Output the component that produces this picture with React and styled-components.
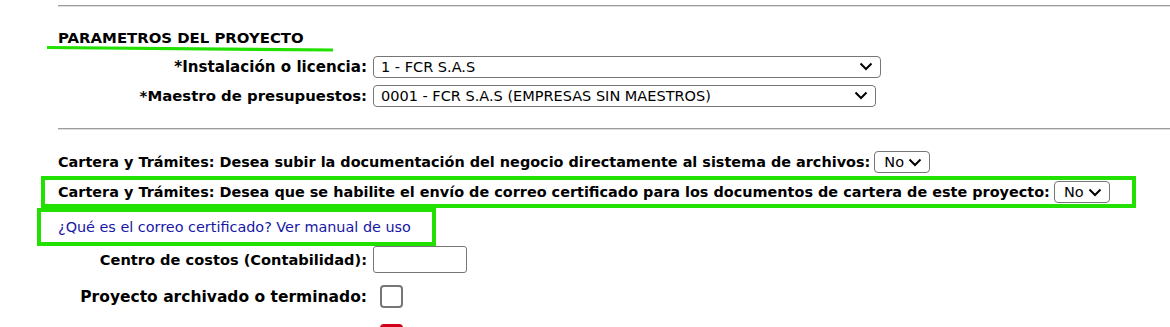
import React from "react";
import styled, { createGlobalStyle } from "styled-components";

const GlobalStyle = createGlobalStyle`
  html, body {
    margin: 0;
    padding: 0;
    background: #fff;
  }
  body {
    font-family: Tahoma, "DejaVu Sans", Verdana, sans-serif;
    color: #000;
    overflow: hidden;
  }
`;

const GREEN = "#22e100";

const Page = styled.div`
  position: relative;
  width: 1170px;
  height: 327px;
  overflow: hidden;
  padding-left: 58px;
  box-sizing: border-box;
`;

const Rule = styled.hr`
  margin: ${(p) => p.$top}px 0 0 0;
  height: 0;
  border: 0;
  border-top: 1px solid #9c9c9c;
  border-bottom: 1px solid #dedede;
`;

const Title = styled.h3`
  margin: 19px 0 0;
  height: 24px;
  line-height: 24px;
  font-size: 14.9px;
  font-weight: bold;
`;

// hand drawn marker under the title
const Underline = styled.svg`
  position: absolute;
  left: 47px;
  top: 45px;
`;

const FieldRow = styled.div`
  display: grid;
  grid-template-columns: 309px auto;
  column-gap: 6px;
  align-items: center;
  height: ${(p) => p.$h}px;
  margin-top: ${(p) => p.$mt || 0}px;
`;

const Label = styled.label`
  text-align: right;
  font-weight: bold;
  font-size: ${(p) => p.$size || 14.6}px;
  white-space: nowrap;
`;

const SelectBox = styled.div`
  display: flex;
  align-items: center;
  justify-content: space-between;
  box-sizing: border-box;
  width: ${(p) => p.$w}px;
  height: 22px;
  padding: 0 7px 0 ${(p) => p.$pl || 7}px;
  border: 1px solid #767676;
  border-radius: 4px;
  background: #fff;
  font-size: 14.5px;
  font-weight: normal;
  white-space: nowrap;
`;

const Chevron = () => (
  <svg width="14" height="9" viewBox="0 0 14 9">
    <path d="M1.5 1.5 L7 7 L12.5 1.5" fill="none" stroke="#000" strokeWidth="2" />
  </svg>
);

const Select = ({ value, w, pl }) => (
  <SelectBox $w={w} $pl={pl}>
    <span>{value}</span>
    <Chevron />
  </SelectBox>
);

const Question = styled.div`
  display: flex;
  align-items: center;
  gap: 4px;
  height: 24px;
  margin-top: ${(p) => p.$mt || 0}px;
  font-weight: bold;
  font-size: 14.43px;
  white-space: nowrap;
`;

const Highlight = styled.div`
  box-sizing: border-box;
  width: ${(p) => p.$w}px;
  height: ${(p) => p.$h}px;
  margin-top: ${(p) => p.$mt || 0}px;
  margin-left: -${(p) => p.$shift}px;
  padding-left: ${(p) => p.$shift - 4}px;
  border: 4px solid ${GREEN};
  display: flex;
  align-items: center;
`;

const HelpLink = styled.a`
  color: #1717a5;
  text-decoration: none;
  font-size: 14.4px;
  white-space: nowrap;
`;

const TextInput = styled.div`
  box-sizing: border-box;
  width: 94px;
  height: 27px;
  border: 1px solid #767676;
  border-radius: 3px;
  background: #fff;
`;

const Check = styled.div`
  box-sizing: border-box;
  width: 23px;
  height: 23px;
  margin-left: 7px;
  border: 2px solid ${(p) => (p.$red ? "#d3001b" : "#767676")};
  border-radius: 4px;
  background: ${(p) => (p.$red ? "#d3001b" : "#fff")};
`;

export default function App() {
  return (
    <>
      <GlobalStyle />
      <Page>
        <Rule $top={5} />
        <Title>PARAMETROS DEL PROYECTO</Title>
        <Underline width="290" height="8" viewBox="0 0 290 8">
          <path d="M0 2.5 L286 5" stroke={GREEN} strokeWidth="3.2" fill="none" />
        </Underline>

        <FieldRow $h={29} $mt={2}>
          <Label $size={15.1}>*Instalación o licencia:</Label>
          <Select value="1 - FCR S.A.S" w={508} />
        </FieldRow>
        <FieldRow $h={29}>
          <Label $size={14.9}>*Maestro de presupuestos:</Label>
          <Select value="0001 - FCR S.A.S (EMPRESAS SIN MAESTROS)" w={503} />
        </FieldRow>

        <Rule $top={18} />

        <Question $mt={20}>
          Cartera y Trámites: Desea subir la documentación del negocio directamente al sistema de archivos:
          <Select value="No" w={56} pl={9} />
        </Question>

        <Highlight $w={1095} $h={32} $shift={17} $mt={2}>
          <Question>
            Cartera y Trámites: Desea que se habilite el envío de correo certificado para los documentos de cartera de este proyecto:
            <Select value="No" w={56} pl={9} />
          </Question>
        </Highlight>
        <Highlight $w={399} $h={38} $shift={21}>
          <HelpLink href="#">¿Qué es el correo certificado? Ver manual de uso</HelpLink>
        </Highlight>

        <FieldRow $h={26}>
          <Label>Centro de costos (Contabilidad):</Label>
          <TextInput />
        </FieldRow>
        <FieldRow $h={29} $mt={10}>
          <Label $size={15.5}>Proyecto archivado o terminado:</Label>
          <Check />
        </FieldRow>
        <FieldRow $h={23} $mt={13}>
          <span />
          <Check $red />
        </FieldRow>
      </Page>
    </>
  );
}
